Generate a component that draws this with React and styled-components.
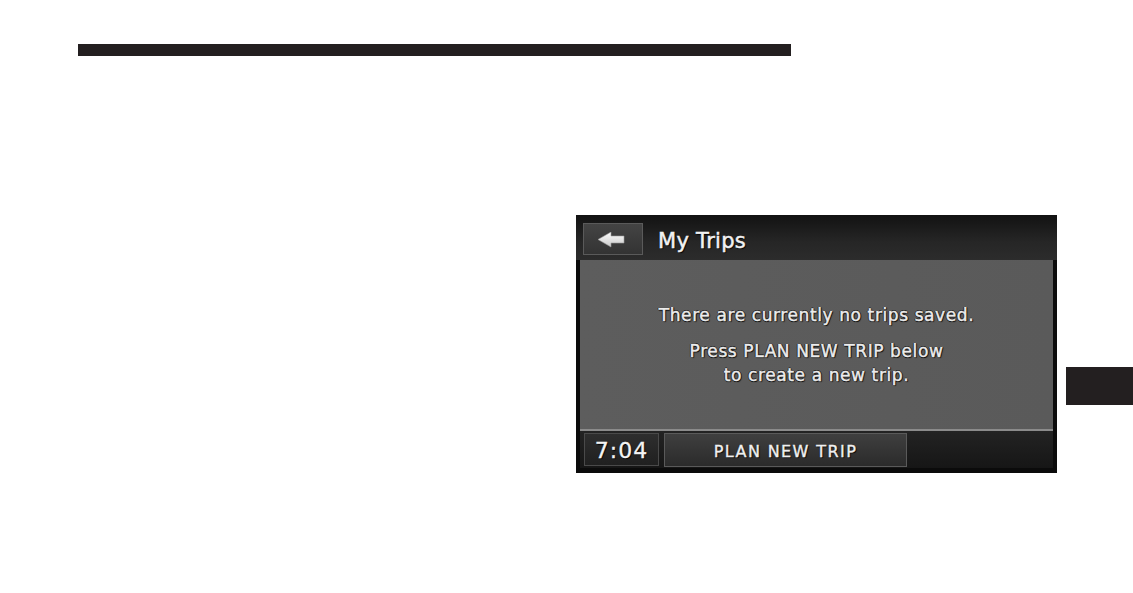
import React from "react";
import styled, { createGlobalStyle } from "styled-components";

const Global = createGlobalStyle`
  html, body { margin: 0; padding: 0; background: #ffffff; }
  body { font-family: "DejaVu Sans", "Liberation Sans", sans-serif; }
`;

const Page = styled.div`
  width: 1133px;
  height: 593px;
  overflow: hidden;
  padding-top: 44px;
  box-sizing: border-box;
`;

const TopRule = styled.div`
  margin-left: 78px;
  width: 713px;
  height: 12px;
  background: #231f20;
`;

const Row = styled.div`
  display: flex;
  align-items: flex-start;
  margin-top: 159px;
  margin-left: 576px;
  gap: 9px;
`;

const Screen = styled.div`
  width: 481px;
  height: 258px;
  background: #0b0b0b;
  padding: 0 4px 5px 4px;
  box-sizing: border-box;
  display: flex;
  flex-direction: column;
`;

const Header = styled.div`
  height: 45px;
  flex: none;
  display: flex;
  align-items: flex-start;
  gap: 15px;
  padding: 8px 0 0 7px;
  box-sizing: border-box;
  background: linear-gradient(#121212, #262626 60%, #2c2c2c);
  margin: 0 -4px;
`;

const BackButton = styled.div`
  width: 60px;
  height: 32px;
  box-sizing: border-box;
  border: 1px solid #5a5a5a;
  background: linear-gradient(#444444, #333333);
  display: flex;
  align-items: center;
  justify-content: center;
  padding: 1px 3px 0 0;
`;

const Title = styled.div`
  color: #f2f2f2;
  font-family: "DejaVu Sans", sans-serif;
  font-size: 21px;
  line-height: 33px;
  padding-top: 2px;
  letter-spacing: 0.3px;
  -webkit-text-stroke: 0.5px #f2f2f2;
  text-shadow: 0 0 1px #000, 1px 1px 1px #000;
`;

const Content = styled.div`
  height: 171px;
  flex: none;
  background: linear-gradient(90deg, #5d5d5d, #5a5a5a);
  border-bottom: 2px solid #8b8b8b;
  box-sizing: border-box;
  display: flex;
  flex-direction: column;
  align-items: center;
  padding-top: 43px;
`;

const Message = styled.div`
  color: #ececec;
  font-family: "DejaVu Sans", sans-serif;
  font-size: 17px;
  line-height: 24px;
  letter-spacing: 0.6px;
  text-align: center;
  margin-bottom: ${(p) => p.$gap || 0}px;
  -webkit-text-stroke: 0.45px #ececec;
  text-shadow: -1px 0 0 #151515, 1px 0 0 #151515, 0 -1px 0 #151515, 0 1px 0 #151515, 1px 1px 1px #111;
`;

const Footer = styled.div`
  flex: 1;
  display: flex;
  align-items: flex-start;
  gap: 5px;
  padding: 2px 0 0 4px;
  background: linear-gradient(#232323, #161616);
`;

const Clock = styled.div`
  width: 75px;
  height: 33px;
  box-sizing: border-box;
  border: 1px solid #4a4a4a;
  background: linear-gradient(#2e2e2e, #202020);
  color: #f4f4f4;
  font-family: "DejaVu Sans", sans-serif;
  font-size: 22px;
  line-height: 34px;
  text-align: center;
  letter-spacing: 1px;
  -webkit-text-stroke: 0.3px #f4f4f4;
  text-shadow: 1px 1px 1px #000;
`;

const PlanButton = styled.div`
  width: 243px;
  height: 34px;
  box-sizing: border-box;
  border: 1px solid #5a5a5a;
  background: linear-gradient(#3f3f3f, #2b2b2b);
  color: #f0f0f0;
  font-family: "DejaVu Sans", sans-serif;
  font-size: 16px;
  line-height: 35px;
  text-align: center;
  letter-spacing: 1.4px;
  -webkit-text-stroke: 0.4px #f0f0f0;
  text-shadow: 0 0 1px #000, 1px 1px 1px #000;
`;

const SideTab = styled.div`
  margin-top: 152px;
  width: 67px;
  height: 38px;
  background: #231f20;
`;

const BackArrow = () => (
  <svg width="27" height="16" viewBox="0 0 27 16">
    <defs>
      <linearGradient id="ag" x1="0" y1="0" x2="0" y2="1">
        <stop offset="0" stopColor="#ffffff" />
        <stop offset="1" stopColor="#c8c8c8" />
      </linearGradient>
    </defs>
    <polygon
      points="0,7.5 13,0 13,4 26,4 26,11 13,11 13,15"
      fill="url(#ag)"
      stroke="#9a9a9a"
      strokeWidth="0.6"
    />
  </svg>
);

export default function App() {
  return (
    <>
      <Global />
      <Page>
        <TopRule />
        <Row>
          <Screen>
            <Header>
              <BackButton>
                <BackArrow />
              </BackButton>
              <Title>My Trips</Title>
            </Header>
            <Content>
              <Message $gap={12}>There are currently no trips saved.</Message>
              <Message>Press PLAN NEW TRIP below</Message>
              <Message>to create a new trip.</Message>
            </Content>
            <Footer>
              <Clock>7:04</Clock>
              <PlanButton>PLAN NEW TRIP</PlanButton>
            </Footer>
          </Screen>
          <SideTab />
        </Row>
      </Page>
    </>
  );
}
